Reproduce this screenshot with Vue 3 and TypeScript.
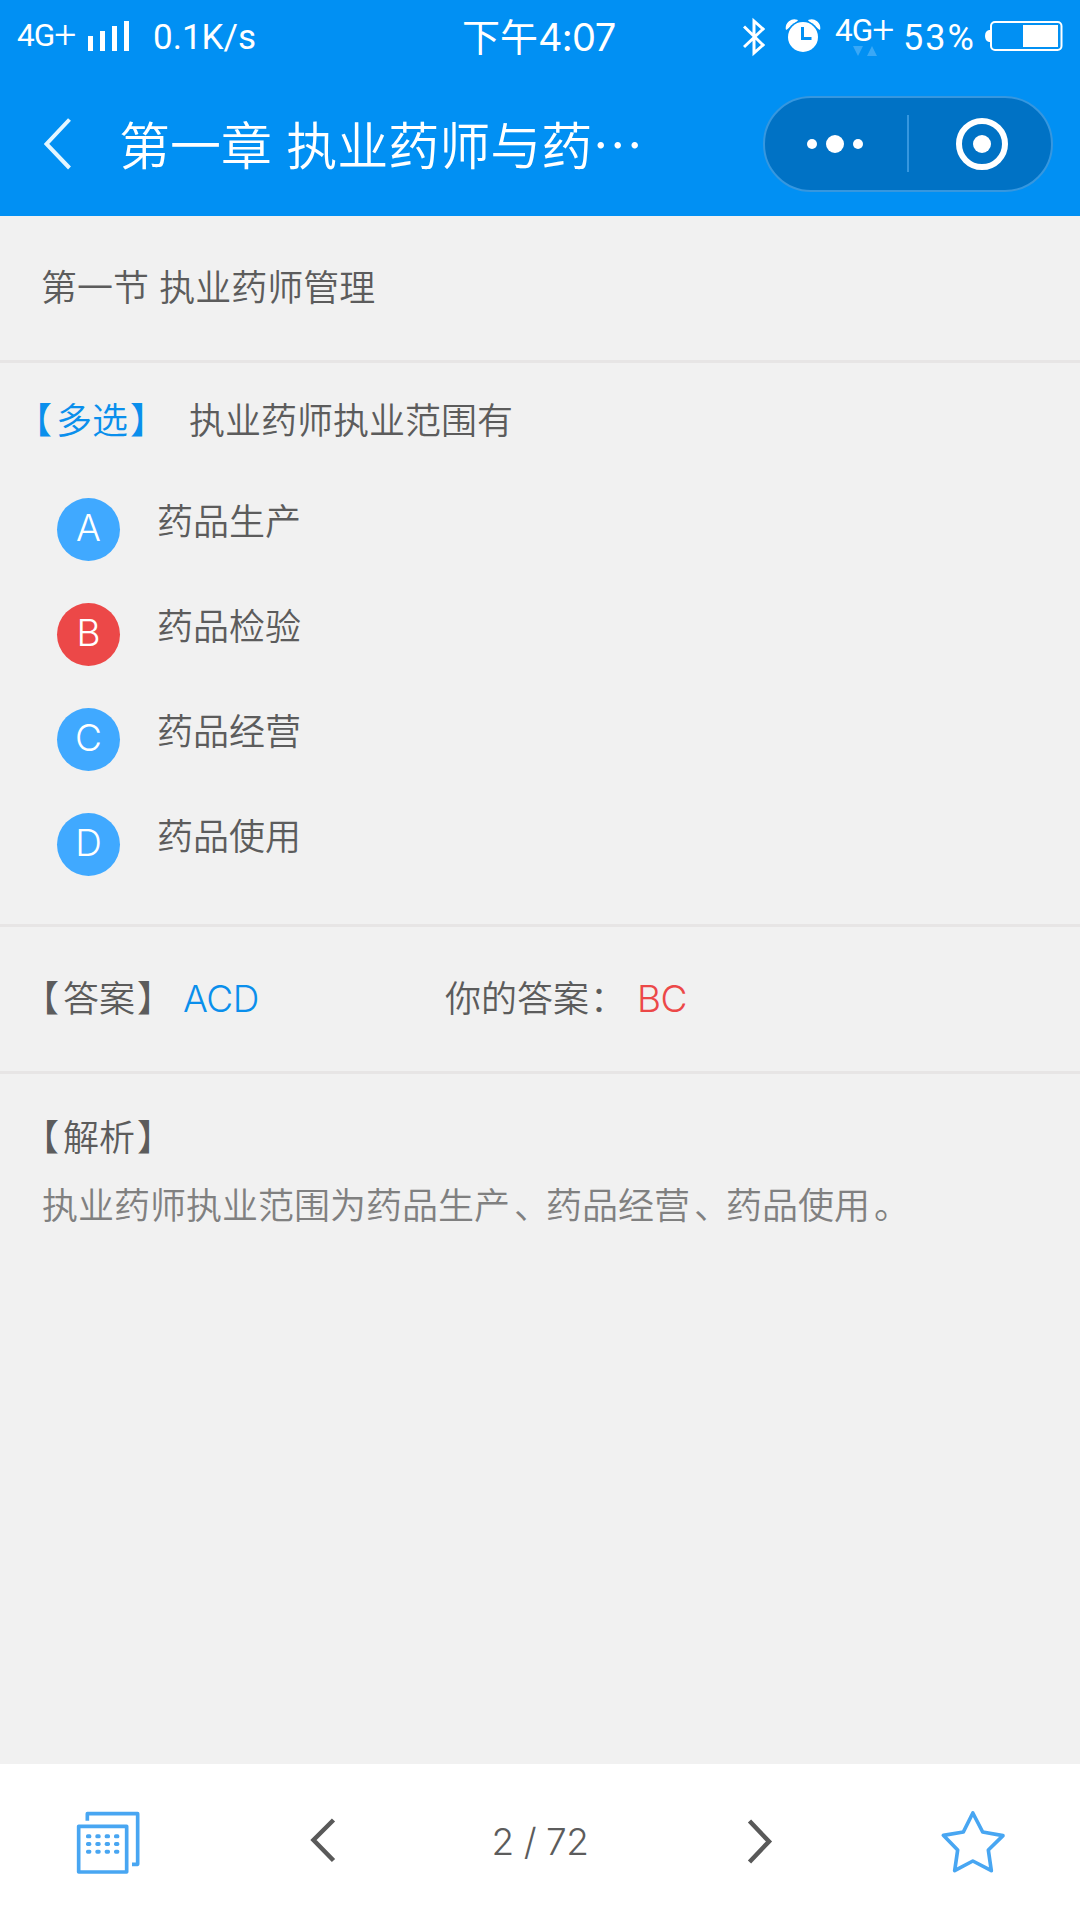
<script setup lang="ts">
import { ref } from 'vue'

interface Option {
  key: string
  text: string
  wrong?: boolean
}

const options: Option[] = [
  { key: 'A', text: '药品生产' },
  { key: 'B', text: '药品检验', wrong: true },
  { key: 'C', text: '药品经营' },
  { key: 'D', text: '药品使用' },
]

const explanation = ['执业药师执业范围为药品生产', '、', '药品经营', '、', '药品使用', '。']
const current = ref(2)
const total = 72
const dotColumns = [266, 294, 322, 350]
const dotRows = [289, 312, 335]
</script>

<template>
  <div class="page">
    <header class="header">
      <div class="status">
        <span class="net">4G<i>+</i></span>
        <svg class="signal" width="42" height="30" viewBox="0 0 42 30" fill="#fff">
          <rect x="0" y="15" width="5" height="15" />
          <rect x="12" y="10" width="5" height="20" />
          <rect x="24" y="5" width="5" height="25" />
          <rect x="36" y="0" width="5" height="30" />
        </svg>
        <span class="speed">0.1K/s</span>
        <span class="time">下午<b>4:07</b></span>
        <svg class="bluetooth" width="22" height="40" viewBox="0 0 22 40" fill="none" stroke="#fff" stroke-width="3">
          <path d="M1 9.500 L20 28 L11 36 V4 L20 12 L1 30" />
        </svg>
        <svg class="alarm" width="36" height="34" viewBox="0 0 36 34">
          <path d="M1.500 10 A8 8 0 0 1 12 1.500 Z M34.500 10 A8 8 0 0 0 24 1.500 Z" fill="#fff" stroke="#fff" stroke-width="1.500" stroke-linejoin="round" />
          <circle cx="18" cy="18" r="16.500" fill="#0190f3" />
          <circle cx="18" cy="18" r="15" fill="#fff" />
          <path d="M17.500 8 V19.500 H26.500" fill="none" stroke="#0190f3" stroke-width="3" />
        </svg>
        <span class="net second">
          4G<i>+</i>
          <svg class="traffic" width="24" height="10" viewBox="0 0 24 10" fill="#3aa8f6">
            <path d="M0 0 H10 L5 10 Z M14 10 H24 L19 0 Z" />
          </svg>
        </span>
        <span class="percent">53%</span>
        <svg class="battery" width="78" height="30" viewBox="0 0 78 30">
          <path d="M5 9 H4 Q0 10 0 15 Q0 20 4 21 H5 Z" fill="#fff" />
          <rect x="6" y="1" width="70.500" height="28" rx="4" fill="none" stroke="#fff" stroke-width="2" />
          <rect x="38" y="4" width="35" height="22" fill="#fff" />
        </svg>
      </div>
      <div class="nav">
        <svg class="back" width="28" height="52" viewBox="0 0 28 52" fill="none" stroke="#e4f6ff" stroke-width="4">
          <path d="M25.500 1.500 L2.500 26 L25.500 50" />
        </svg>
        <h1 class="title">第一章 执业药师与药…</h1>
        <div class="capsule">
          <svg width="290" height="96" viewBox="0 0 290 96">
            <rect x="1" y="1" width="288" height="94" rx="47" fill="#0072c5" stroke="#3697df" stroke-width="2" />
            <path d="M145 19 V76" stroke="#3697df" stroke-width="2" />
            <g fill="#fff">
              <circle cx="49" cy="48" r="5" />
              <circle cx="72" cy="48" r="9" />
              <circle cx="95" cy="48" r="5" />
              <circle cx="219" cy="48" r="9" />
            </g>
            <circle cx="219" cy="48" r="23" fill="none" stroke="#fff" stroke-width="6" />
          </svg>
        </div>
      </div>
    </header>

    <main class="content">
      <section class="section">第一节 执业药师管理</section>

      <section class="question">
        <div class="stem"><span class="kind tag">多选</span><span>执业药师执业范围有</span></div>
        <div v-for="o in options" :key="o.key" class="option">
          <span class="badge" :class="{ wrong: o.wrong }">{{ o.key }}</span>
          <span class="option-text">{{ o.text }}</span>
        </div>
      </section>

      <section class="answers">
        <span class="label tag">答案</span><span class="right">ACD</span>
        <span class="yours">你的答案<span class="colon">：</span></span><span class="bad">BC</span>
      </section>

      <section class="analysis">
        <div class="tag">解析</div>
        <p><span v-for="(part, i) in explanation" :key="i" :class="{ mark: part.length === 1 }">{{ part }}</span></p>
      </section>
    </main>

    <footer class="footer">
      <svg class="cards" width="66" height="66" viewBox="225 210 198 198" fill="none" stroke="#48a6f2" stroke-width="11" stroke-linejoin="round">
        <path d="M262 242 V221 H413 V373 H396" />
        <rect x="236" y="259" width="144" height="137" />
        <g fill="#48a6f2" stroke="none">
          <template v-for="y in dotRows" :key="y">
            <rect v-for="x in dotColumns" :key="x" :x="x - 8" :y="y - 6" width="16" height="12" rx="5" />
          </template>
        </g>
      </svg>
      <svg class="prev" width="26" height="46" viewBox="0 0 26 46" fill="none" stroke="#595959" stroke-width="4.500">
        <path d="M23.500 2 L3.500 22 L23.500 42.500" />
      </svg>
      <span class="pager">{{ current }} / {{ total }}</span>
      <svg class="next" width="26" height="46" viewBox="0 0 26 46" fill="none" stroke="#595959" stroke-width="4.500">
        <path d="M2.500 2 L22 22.500 L2.500 43" />
      </svg>
      <svg class="star" width="66" height="66" viewBox="660 210 198 198" fill="none" stroke="#48a6f2" stroke-width="11" stroke-linejoin="round">
        <path d="M758.500 219 L788 276 L849 287 L805 330 L814 392 L758.500 363 L704 392 L713 330 L670 286 L730 276 Z" />
      </svg>
    </footer>
  </div>
</template>

<style>
body {
  margin: 0;
}
</style>

<style scoped>
.page {
  width: 1080px;
  height: 1920px;
  display: flex;
  flex-direction: column;
  background: #f1f1f1;
  color: #5c5c5c;
  font-family: Inter, "Noto Sans CJK SC DemiLight", "Noto Sans CJK SC", sans-serif;
  font-size: 36px;
  font-weight: 350;
  line-height: 54px;
  white-space: nowrap;
  overflow: hidden;
}
.header {
  height: 216px;
  background: #0190f3;
  color: #fff;
}
.status {
  height: 72px;
  display: flex;
  align-items: flex-start;
  font-family: Roboto, "Noto Sans CJK SC", sans-serif;
  font-weight: 400;
}
.status > * {
  flex: none;
}
.net {
  width: 60px;
  margin: 16px 0 0 17px;
  font-size: 31.500px;
  line-height: 40px;
  letter-spacing: -1px;
}
.net i {
  position: relative;
  top: 2px;
  font-size: 39px;
  font-style: normal;
  font-weight: 350;
  line-height: 30px;
}
.signal {
  margin: 21px 0 0 11px;
}
.speed {
  width: 110px;
  margin: 17px 0 0 23px;
  font-size: 35px;
  line-height: 42px;
}
.time {
  width: 160px;
  margin: 10px 0 0 199px;
  font-size: 38px;
  line-height: 54px;
}
.time b {
  font-family: Inter, sans-serif;
  font-weight: 400;
  letter-spacing: -0.700px;
}
.bluetooth {
  margin: 17px 0 0 121px;
}
.alarm {
  margin: 19px 0 0 20px;
}
.second {
  position: relative;
  margin: 11px 0 0 14px;
}
.traffic {
  position: absolute;
  left: 18px;
  top: 35px;
}
.percent {
  width: 74px;
  margin: 17px 0 0 8px;
  font-size: 36px;
  line-height: 42px;
  letter-spacing: 2px;
}
.battery {
  margin: 21px 0 0 8px;
}
.nav {
  height: 144px;
  display: flex;
  align-items: center;
}
.back {
  margin-left: 44px;
}
.title {
  width: 560px;
  margin: -2px 0 0 47px;
  font-family: "Noto Sans CJK SC DemiLight", "Noto Sans CJK SC", sans-serif;
  font-size: 51px;
  font-weight: 350;
  line-height: 72px;
  word-spacing: 3px;
}
.capsule {
  width: 290px;
  height: 96px;
  margin-left: 84px;
}
.capsule svg {
  display: block;
}
.content {
  flex: 1;
}
.section {
  height: 144px;
  padding-left: 41px;
  border-bottom: 3px solid #e7e5e5;
  line-height: 144px;
}
.question {
  height: 564px;
  box-sizing: border-box;
  padding-top: 31px;
  border-bottom: 3px solid #e7e5e5;
}
.stem {
  height: 104px;
  padding-left: 20px;
}
.tag::before {
  content: "【";
  margin: 0 4px 0 -4px;
}
.tag::after {
  content: "】";
  margin: 0 -2px 0 2px;
}
.kind {
  color: #0a8fec;
  margin-right: 25px;
}
.option {
  height: 105px;
  display: flex;
  align-items: flex-start;
  padding-left: 57px;
}
.badge {
  width: 63px;
  height: 63px;
  border-radius: 50%;
  background: #40a9ff;
  color: #fff;
  font-size: 37px;
  line-height: 60px;
  text-align: center;
}
.wrong {
  background: #ec4848;
}
.option-text {
  margin: -3px 0 0 37px;
}
.answers {
  height: 144px;
  display: flex;
  border-bottom: 3px solid #e7e5e5;
  line-height: 145px;
  padding-left: 27px;
}
.label {
  width: 156px;
}
.right,
.bad {
  font-size: 37px;
  letter-spacing: -0.500px;
  line-height: 143px;
}
.right {
  width: 262px;
  color: #0a8fec;
}
.yours {
  width: 192px;
}
.colon {
  margin-left: 1px;
}
.bad {
  color: #ec4848;
}
.analysis {
  padding: 37px 0 0 27px;
}
.analysis p {
  margin: 14px 0 0 15px;
  color: #808080;
}
.mark {
  margin-left: 4px;
  letter-spacing: -4px;
}
.footer {
  height: 156px;
  background: #fff;
  display: flex;
  align-items: flex-start;
}
.footer > * {
  flex: none;
}
.cards {
  margin: 46px 0 0 75px;
}
.prev {
  margin: 54px 0 0 169px;
}
.pager {
  width: 200px;
  margin: 51px 0 0 104px;
  font-size: 37px;
  font-weight: 300;
  letter-spacing: -0.500px;
  text-align: center;
}
.next {
  margin: 55px 0 0 107px;
}
.star {
  margin: 46px 0 0 167px;
}
</style>
